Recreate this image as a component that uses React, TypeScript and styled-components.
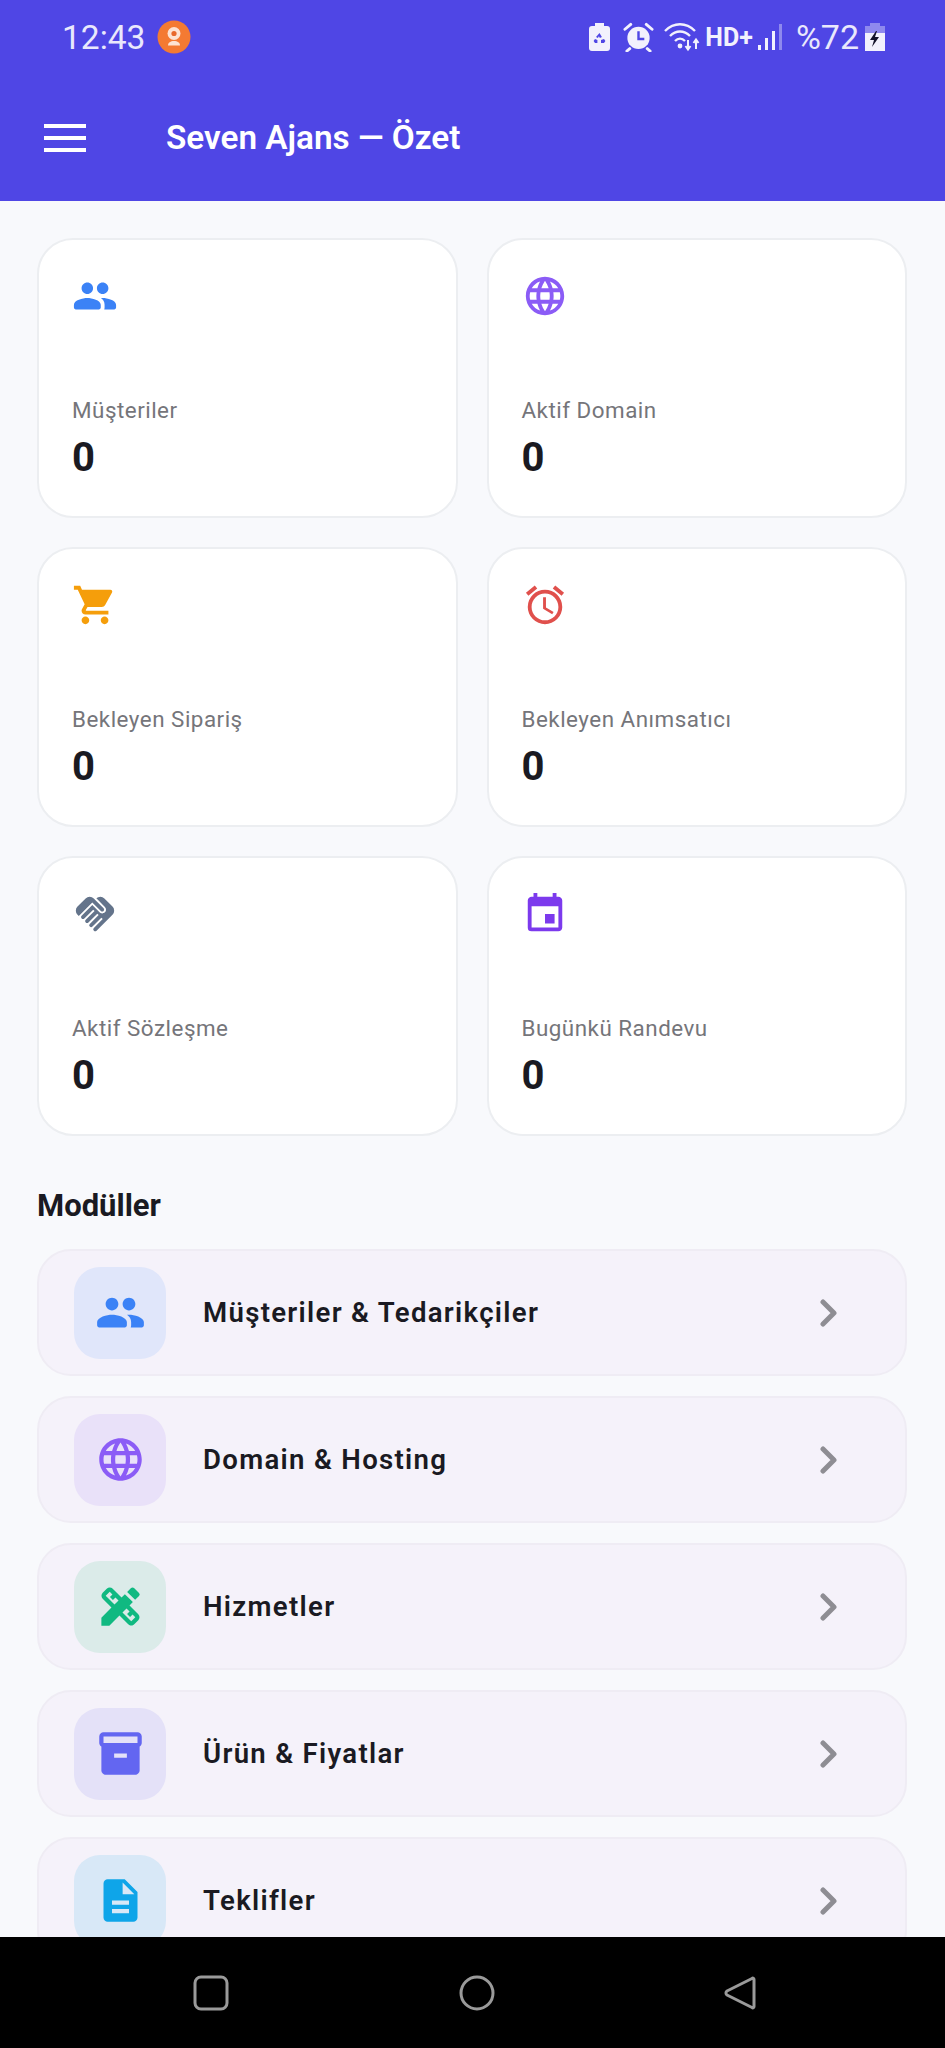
import React from "react";
import styled, { createGlobalStyle } from "styled-components";
import {
  MdLanguage,
  MdShoppingCart,
  MdOutlineAlarm,
  MdHandshake,
  MdEvent,
  MdDesignServices,
  MdInventory2,
  MdDescription,
} from "react-icons/md";

const GlobalStyle = createGlobalStyle`
  html, body {
    margin: 0;
    padding: 0;
    background: #000000;
  }
  * {
    box-sizing: border-box;
  }
`;

const PeopleIcon = ({ size }: { size: number }) => (
  <svg width={size} height={size} viewBox="0 0 24 24" fill="currentColor">
    <path d="M16 11c1.66 0 2.99-1.34 2.99-3S17.66 5 16 5s-3 1.34-3 3 1.34 3 3 3zm-8 0c1.66 0 2.99-1.34 2.99-3S9.66 5 8 5 5 6.34 5 8s1.34 3 3 3zm0 2c-2.33 0-7 1.17-7 3.5V18c0 .55.45 1 1 1h12c.55 0 1-.45 1-1v-1.5c0-2.33-4.67-3.5-7-3.5zm8 0c-.29 0-.62.02-.97.05.02.01.03.03.04.04 1.14.83 1.93 1.94 1.93 3.41V18c0 .35-.07.69-.18 1H22c.55 0 1-.45 1-1v-1.5c0-2.33-4.67-3.5-7-3.5z" />
  </svg>
);

const stats = [
  { label: "Müşteriler", value: "0", color: "#3b82f6", icon: PeopleIcon },
  { label: "Aktif Domain", value: "0", color: "#8b5cf6", icon: MdLanguage },
  { label: "Bekleyen Sipariş", value: "0", color: "#f59e0b", icon: MdShoppingCart },
  { label: "Bekleyen Anımsatıcı", value: "0", color: "#e0504c", icon: MdOutlineAlarm },
  { label: "Aktif Sözleşme", value: "0", color: "#64748b", icon: MdHandshake },
  { label: "Bugünkü Randevu", value: "0", color: "#7c3aed", icon: MdEvent },
];

const modules = [
  { label: "Müşteriler & Tedarikçiler", color: "#3b82f6", tint: "#e0e6fa", icon: PeopleIcon },
  { label: "Domain & Hosting", color: "#8b5cf6", tint: "#e9e1f9", icon: MdLanguage },
  { label: "Hizmetler", color: "#10b981", tint: "#dbebe9", icon: MdDesignServices },
  { label: "Ürün & Fiyatlar", color: "#6366f1", tint: "#e4e1f8", icon: MdInventory2 },
  { label: "Teklifler", color: "#0ea5e9", tint: "#d8e8f7", icon: MdDescription },
];

const App = () => {
  return (
    <Screen>
      <GlobalStyle />
      <Header>
        <StatusBar>
          <StatusLeft>
            <Clock>12:43</Clock>
            <svg width="34" height="34" viewBox="0 0 34 34">
              <circle cx="17" cy="17" r="16.5" fill="#f47a32" />
              <circle cx="17" cy="13.5" r="6.5" fill="#fde3d2" />
              <circle cx="17" cy="13.5" r="2.6" fill="#e8682a" />
              <path d="M11 25.5c0-3 2.5-4.5 6-4.5s6 1.500 6 4.500z" fill="#fde3d2" />
            </svg>
          </StatusLeft>
          <StatusRight>
            <svg width="21" height="28" viewBox="0 0 21 28">
              <path d="M6 0h9v3h3a3 3 0 0 1 3 3v19a3 3 0 0 1-3 3H3a3 3 0 0 1-3-3V6a3 3 0 0 1 3-3h3z" fill="#f2f1fd" />
              <path d="M10.500 10l2.400 4-2 1-1-1.800-1 1.800-1.900-1zM6 16l2.400 1v3H6l-1.400-2zM15 16l1.400 2-1.400 2h-3v-3z" fill="#4f46e5" />
            </svg>
            <StatusSlot $gap={13}>
              <svg width="31" height="30" viewBox="0 0 32 30">
                <circle cx="16" cy="16" r="11.500" fill="#f2f1fd" />
                <path d="M16 9v8h6" fill="none" stroke="#4f46e5" strokeWidth="2.500" />
                <path d="M2 7l6-5M30 7l-6-5M7 27l-3 2.500M25 27l3 2.500" stroke="#f2f1fd" strokeWidth="3" strokeLinecap="round" />
              </svg>
            </StatusSlot>
            <StatusSlot $gap={10}>
              <svg width="37" height="30" viewBox="0 0 37 30">
                <path d="M1 9c9-9 21-9 30 0M6 14c6-6 14-6 20 0M11 19c3-3 7-3 10 0" fill="none" stroke="#f2f1fd" strokeWidth="2.400" />
                <circle cx="16" cy="24" r="2.400" fill="#f2f1fd" />
                <path d="M24 18v9M21.500 24l2.500 3.500 2.500-3.500M32 27v-9M29.500 21l2.500-3.500 2.500 3.500" fill="none" stroke="#f2f1fd" strokeWidth="2" />
              </svg>
            </StatusSlot>
            <StatusSlot $gap={4}>
              <NetworkLabel>HD+</NetworkLabel>
            </StatusSlot>
            <StatusSlot $gap={5}>
              <svg width="25" height="28" viewBox="0 0 25 28">
                <rect x="0" y="22" width="3" height="5" fill="#f2f1fd" />
                <rect x="7" y="15" width="3" height="12" fill="#f2f1fd" />
                <rect x="14" y="8" width="3" height="19" fill="#f2f1fd" />
                <rect x="21" y="1" width="3" height="26" fill="#8f89ee" />
              </svg>
            </StatusSlot>
            <StatusSlot $gap={13}>
              <BatteryText>%72</BatteryText>
            </StatusSlot>
            <StatusSlot $gap={6}>
              <svg width="20" height="28" viewBox="0 0 20 28">
                <path d="M5 0h10v3h5v7H0V3h5z" fill="#8f89ee" />
                <rect x="0" y="10" width="20" height="18" fill="#f2f1fd" />
                <path d="M11 8l-6 9h4l-2 7 7-10h-4l2-6z" fill="#14132a" />
              </svg>
            </StatusSlot>
          </StatusRight>
        </StatusBar>
        <AppBar>
          <svg width="42" height="28" viewBox="0 0 42 28">
            <rect x="0" y="0" width="42" height="4" fill="#ffffff" />
            <rect x="0" y="12" width="42" height="4" fill="#ffffff" />
            <rect x="0" y="24" width="42" height="4" fill="#ffffff" />
          </svg>
          <AppTitle>Seven Ajans — Özet</AppTitle>
        </AppBar>
      </Header>
      <Content>
        <StatGrid>
          {stats.map((stat) => (
            <StatCard key={stat.label}>
              <StatIcon $color={stat.color}>
                <stat.icon size={46} />
              </StatIcon>
              <StatLabel>{stat.label}</StatLabel>
              <StatValue>{stat.value}</StatValue>
            </StatCard>
          ))}
        </StatGrid>
        <SectionTitle>Modüller</SectionTitle>
        <ModuleList>
          {modules.map((mod) => (
            <ModuleRow key={mod.label}>
              <ModuleIcon $color={mod.color} $tint={mod.tint}>
                <mod.icon size={51} />
              </ModuleIcon>
              <ModuleLabel>{mod.label}</ModuleLabel>
              <svg width="20" height="28" viewBox="0 0 20 28">
                <path d="M4 3l11 11L4 25" fill="none" stroke="#8e8d93" strokeWidth="5" strokeLinecap="round" strokeLinejoin="round" />
              </svg>
            </ModuleRow>
          ))}
        </ModuleList>
      </Content>
      <NavBar>
        <svg width="36" height="36" viewBox="0 0 36 36">
          <rect x="2" y="2" width="32" height="32" rx="6" fill="none" stroke="#9a9a9a" strokeWidth="3" />
        </svg>
        <svg width="36" height="36" viewBox="0 0 36 36">
          <circle cx="18" cy="18" r="16" fill="none" stroke="#9a9a9a" strokeWidth="3" />
        </svg>
        <svg width="32" height="36" viewBox="0 0 32 36">
          <path d="M28 3.500c1-.8 2-.2 2 1v27c0 1.200-1 1.800-2 1L3 20c-1.400-1-1.400-3 0-4z" fill="none" stroke="#9a9a9a" strokeWidth="3" strokeLinejoin="round" />
        </svg>
      </NavBar>
    </Screen>
  );
};

const Screen = styled.div`
  display: flex;
  flex-direction: column;
  width: 945px;
  height: 2048px;
  overflow: hidden;
  background: #f8f9fc;
  font-family: Roboto, "Noto Sans", sans-serif;
  color: #1a1a22;
`;

const Header = styled.header`
  flex: none;
  height: 201px;
  background: #4f46e5;
  color: #ffffff;
`;

const StatusBar = styled.div`
  display: flex;
  align-items: center;
  justify-content: space-between;
  height: 74px;
  padding: 0 60px 0 62px;
`;

const StatusLeft = styled.div`
  display: flex;
  align-items: center;
  gap: 12px;
`;

const Clock = styled.span`
  font-size: 33.500px;
  font-weight: 400;
  color: #e9e8fc;
`;

const StatusRight = styled.div`
  display: flex;
  align-items: center;
`;

const StatusSlot = styled.div<{ $gap: number }>`
  display: flex;
  align-items: center;
  margin-left: ${(props) => props.$gap}px;
`;

const NetworkLabel = styled.span`
  font-size: 25px;
  font-weight: 700;
  color: #f2f1fd;
`;

const BatteryText = styled.span`
  font-size: 34px;
  font-weight: 400;
  color: #e9e8fc;
`;

const AppBar = styled.div`
  display: flex;
  align-items: center;
  gap: 80px;
  height: 127px;
  padding: 0 44px;
`;

const AppTitle = styled.h1`
  margin: 0;
  font-size: 33.300px;
  font-weight: 600;
  color: #ffffff;
`;

const Content = styled.main`
  flex: 1;
  min-height: 0;
  overflow: hidden;
  padding: 37px 38px 0 37px;
`;

const StatGrid = styled.div`
  display: grid;
  grid-template-columns: 1fr 1fr;
  gap: 29px;
`;

const StatCard = styled.div`
  display: flex;
  flex-direction: column;
  height: 280px;
  padding: 33px 33px 35px;
  background: #ffffff;
  border: 2px solid #eceef1;
  border-radius: 36px;
`;

const StatIcon = styled.div<{ $color: string }>`
  display: flex;
  height: 46px;
  color: ${(props) => props.$color};
`;

const StatLabel = styled.div`
  margin-top: auto;
  font-size: 22.400px;
  letter-spacing: 0.5px;
  color: #75757a;
`;

const StatValue = styled.div`
  margin-top: 12px;
  font-size: 40px;
  line-height: 46px;
  font-weight: 700;
  color: #1a1a22;
`;

const SectionTitle = styled.h2`
  margin: 52px 0 25px;
  font-size: 31px;
  line-height: 36px;
  font-weight: 700;
  color: #1a1a22;
`;

const ModuleList = styled.div`
  display: flex;
  flex-direction: column;
  gap: 20px;
`;

const ModuleRow = styled.div`
  display: flex;
  flex: none;
  align-items: center;
  height: 127px;
  padding: 0 66px 0 35px;
  background: #f5f2fa;
  border: 2px solid #efecf4;
  border-radius: 34px;
`;

const ModuleIcon = styled.div<{ $color: string; $tint: string }>`
  display: flex;
  flex: none;
  align-items: center;
  justify-content: center;
  width: 92px;
  height: 92px;
  background: ${(props) => props.$tint};
  border-radius: 26px;
  color: ${(props) => props.$color};
`;

const ModuleLabel = styled.div`
  flex: 1;
  margin-left: 37px;
  font-size: 27.600px;
  font-weight: 600;
  letter-spacing: 1.300px;
  color: #1a1a22;
`;

const NavBar = styled.nav`
  display: flex;
  flex: none;
  align-items: center;
  justify-content: space-between;
  height: 111px;
  padding: 0 189px 0 193px;
  background: #000000;
`;

export default App;
